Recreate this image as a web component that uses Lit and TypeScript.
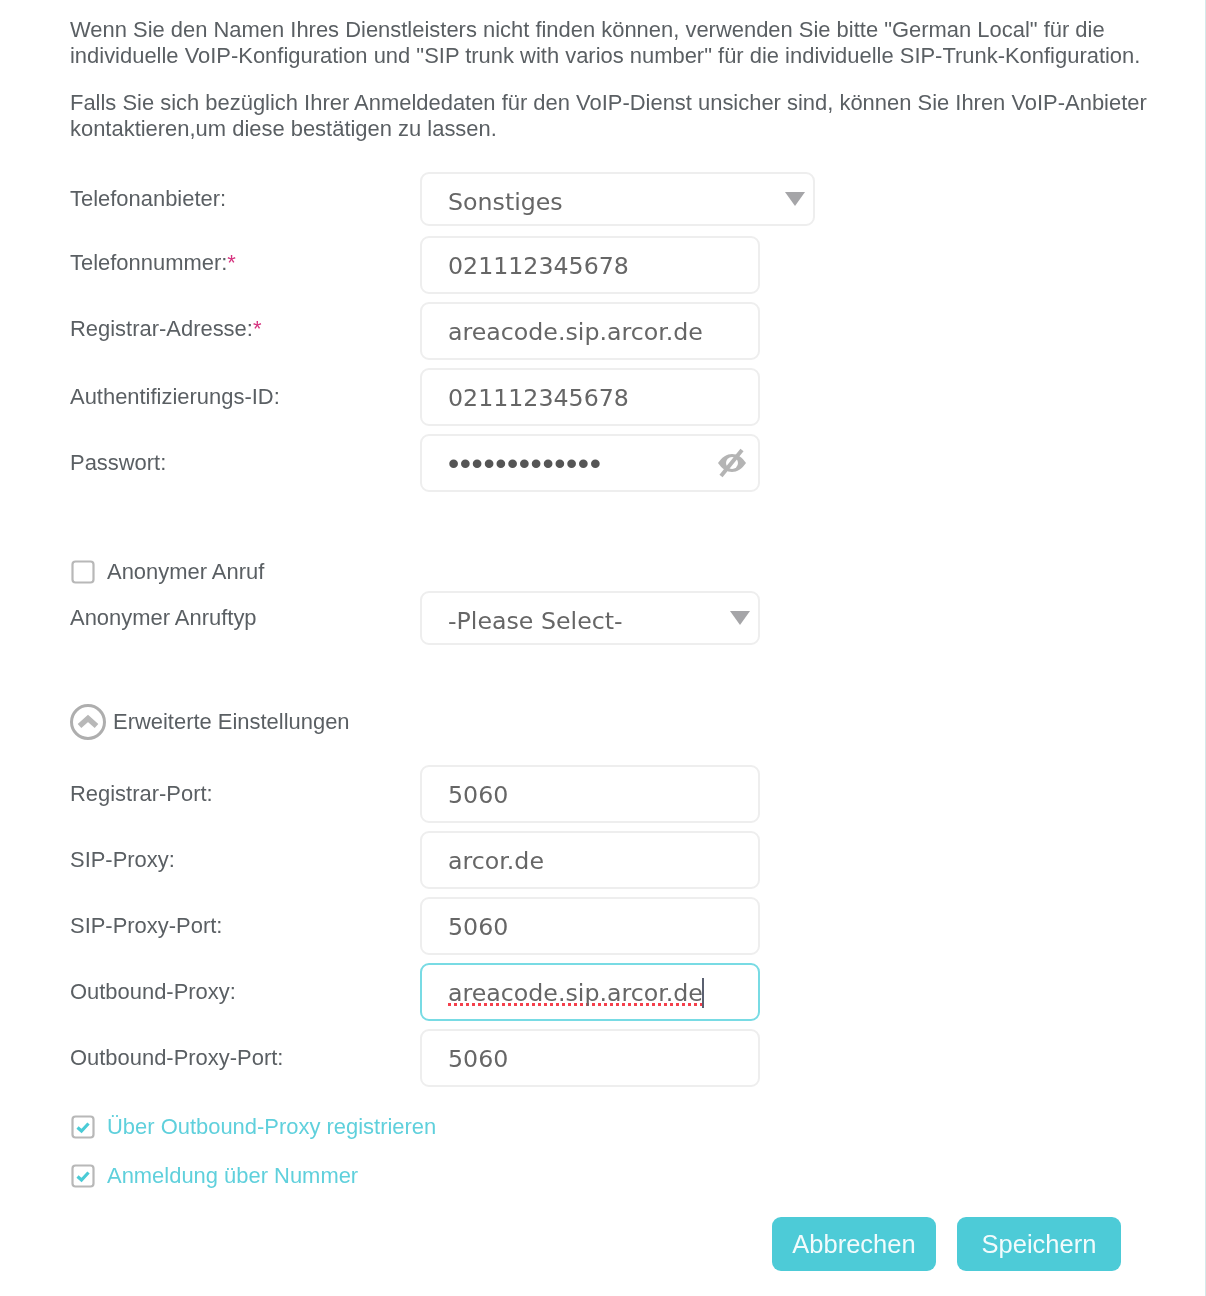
import { LitElement, html, css, svg } from "lit";
import { customElement } from "lit/decorators.js";

const checkBox = (checked: boolean) => html`<svg class="cb" viewBox="0 0 24 24" width="24" height="24">
  <rect x="1.5" y="1.5" width="21" height="21" rx="3" fill="#fff" stroke="#b8b8b8" stroke-width="2.2"></rect>
  ${checked ? svg`<path d="M6.5 12.5l4 3.5 7-7.5" fill="none" stroke="#4acbd6" stroke-width="3.2"></path>` : ""}
</svg>`;

@customElement("app-root")
export class AppRoot extends LitElement {
  static styles = css`
    :host {
      display: block;
      box-sizing: border-box;
      width: 1206px;
      height: 1296px;
      padding: 17px 0 0 70px;
      background: #fff;
      border-right: 1px solid #d4e9ea;
      font-family: "Liberation Sans", Arial, sans-serif;
      font-size: 21.94px;
      color: #5a5f63;
      overflow: hidden;
      filter: blur(0.6px);
    }
    p {
      margin: 0 0 21px;
      line-height: 26px;
      width: 1100px;
      white-space: nowrap;
    }
    .row {
      display: grid;
      grid-template-columns: 350px 340px;
      margin-bottom: 8px;
    }
    .label {
      padding-top: 14px;
      line-height: 26px;
    }
    .lower .label, .label.low { padding-top: 16px; }
    .req { color: #d6337f; }
    .field {
      box-sizing: border-box;
      height: 58px;
      border: 2px solid #eeeeee;
      border-radius: 9px;
      padding: 2px 26px 0;
      display: flex;
      align-items: center;
      position: relative;
      font-family: "DejaVu Sans", sans-serif;
      font-size: 23.7px;
      color: #666;
      white-space: nowrap;
    }
    .select { height: 54px; padding-top: 6px; }
    .wide { width: 395px; }
    .arrow {
      position: absolute;
      right: 8px;
      top: 18px;
      width: 0;
      height: 0;
      border-left: 10px solid transparent;
      border-right: 10px solid transparent;
      border-top: 14px solid #a5a5a8;
    }
    .dots {
      font-family: "Liberation Sans", sans-serif;
      font-size: 32px;
      letter-spacing: 0.6px;
      line-height: 30px;
      margin-top: -2px;
      color: #555;
    }
    .eye { position: absolute; right: 10px; top: 12px; }
    .focus { border-color: #78dbe4; }
    .typo {
      text-decoration: underline dotted #f4404c;
      text-decoration-thickness: 2.5px;
      text-decoration-skip-ink: none;
      text-underline-offset: 2px;
    }
    .caret {
      display: inline-block;
      width: 2px;
      height: 30px;
      background: #5a6070;
      margin-left: -1px;
    }
    .check {
      display: flex;
      align-items: center;
      gap: 12px;
      height: 26px;
      line-height: 26px;
    }
    .cb { flex: none; margin-left: 1px; }
    .anon { margin: 67px 0 6px; }
    .anon-row { margin-top: 4px; }
    .advanced {
      display: flex;
      align-items: center;
      gap: 6px;
      margin: 58px 0 24px -1px;
      height: 38px;
    }
    .on { color: #5fd0dc; }
    .on1 { margin-top: 27px; }
    .on2 { margin-top: 23px; }
    .actions {
      display: flex;
      justify-content: flex-end;
      gap: 21px;
      width: 1051px;
      margin-top: 28px;
    }
    button {
      width: 164px;
      height: 54px;
      border: 0;
      border-radius: 9px;
      background: #4dcbd7;
      color: #f2fbfc;
      font: 25.5px "Liberation Sans", Arial, sans-serif;
      padding: 0;
    }
    .provider { margin-top: 30px; margin-bottom: 10px; }
  `;

  private row(label: string, value: string, req = false, low = false) {
    return html`<div class="row">
      <div class="label ${low ? "low" : ""}">${label}${req ? html`<span class="req">*</span>` : ""}</div>
      <div class="field">${value}</div>
    </div>`;
  }

  render() {
    return html`
      <p>Wenn Sie den Namen Ihres Dienstleisters nicht finden können, verwenden Sie bitte "German Local" für die<br />individuelle VoIP-Konfiguration und "SIP trunk with varios number" für die individuelle SIP-Trunk-Konfiguration.</p>
      <p>Falls Sie sich bezüglich Ihrer Anmeldedaten für den VoIP-Dienst unsicher sind, können Sie Ihren VoIP-Anbieter<br />kontaktieren,um diese bestätigen zu lassen.</p>

      <div class="row provider">
        <div class="label">Telefonanbieter:</div>
        <div class="field select wide">Sonstiges<span class="arrow"></span></div>
      </div>
      ${this.row("Telefonnummer:", "021112345678", true)}
      ${this.row("Registrar-Adresse:", "areacode.sip.arcor.de", true)}
      ${this.row("Authentifizierungs-ID:", "021112345678", false, true)}
      <div class="row">
        <div class="label low">Passwort:</div>
        <div class="field"><span class="dots">•••••••••••••</span>
          <svg class="eye" width="32" height="30" viewBox="0 0 32 30">
            <path d="M2 15c4-6 9-9 14-9s10 3 14 9c-4 6-9 9-14 9S6 21 2 15z" fill="#b4b4b4"></path>
            <circle cx="16" cy="15" r="6" fill="#fff"></circle>
            <path d="M5 28L26 2" stroke="#b4b4b4" stroke-width="4"></path>
          </svg>
        </div>
      </div>

      <div class="check anon">${checkBox(false)}<span>Anonymer Anruf</span></div>
      <div class="row anon-row">
        <div class="label">Anonymer Anruftyp</div>
        <div class="field select">-Please Select-<span class="arrow"></span></div>
      </div>

      <div class="advanced">
        <svg width="38" height="38" viewBox="0 0 38 38">
          <circle cx="19" cy="19" r="16.5" fill="none" stroke="#aeaeae" stroke-width="3"></circle>
          <path d="M10.5 23l8.5-7.5 8.5 7.5" fill="none" stroke="#b8b8b8" stroke-width="5.5"></path>
        </svg>
        <span>Erweiterte Einstellungen</span>
      </div>

      <div class="lower">
        ${this.row("Registrar-Port:", "5060")}
        ${this.row("SIP-Proxy:", "arcor.de")}
        ${this.row("SIP-Proxy-Port:", "5060")}
        <div class="row">
          <div class="label">Outbound-Proxy:</div>
          <div class="field focus"><span class="typo">areacode.sip.arcor.de</span><span class="caret"></span></div>
        </div>
        ${this.row("Outbound-Proxy-Port:", "5060")}
      </div>

      <div class="check on on1">${checkBox(true)}<span>Über Outbound-Proxy registrieren</span></div>
      <div class="check on on2">${checkBox(true)}<span>Anmeldung über Nummer</span></div>

      <div class="actions">
        <button>Abbrechen</button>
        <button>Speichern</button>
      </div>
    `;
  }
}
